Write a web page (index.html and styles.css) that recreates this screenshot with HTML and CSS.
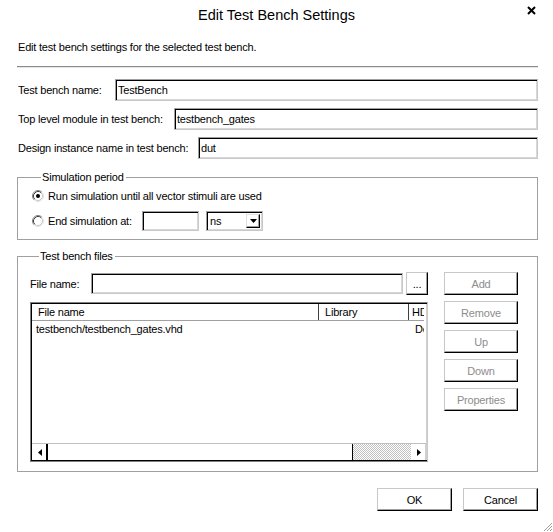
FILE: index.html
```html
<!DOCTYPE html>
<html>
<head>
<meta charset="utf-8">
<title>Edit Test Bench Settings</title>
<link rel="stylesheet" href="styles.css">
</head>
<body>
<div class="dialog">
  <div class="titlebar">
    <span class="title">Edit Test Bench Settings</span>
    <span class="close">
      <svg width="9" height="9" viewBox="0 0 9 9"><path d="M1 1L8 8M8 1L1 8" stroke="#000" stroke-width="2"/></svg>
    </span>
  </div>
  <div class="content">
    <p class="intro">Edit test bench settings for the selected test bench.</p>
    <div class="sep"></div>
    <div class="fields">
      <div class="row"><span class="lbl lbl-name">Test bench name:</span><div class="input">TestBench</div></div>
      <div class="row"><span class="lbl lbl-top">Top level module in test bench:</span><div class="input">testbench_gates</div></div>
      <div class="row"><span class="lbl lbl-inst">Design instance name in test bench:</span><div class="input">dut</div></div>
    </div>

    <fieldset class="group sim">
      <legend>Simulation period</legend>
      <div class="opt">
        <svg class="radio" width="12" height="12" viewBox="0 0 12 12">
          <circle cx="6" cy="6" r="5.5" fill="#fff"/>
          <path d="M2.11 9.89A5.5 5.5 0 0 1 9.89 2.11" stroke="#808080" fill="none"/>
          <path d="M9.89 2.11A5.5 5.5 0 0 1 2.11 9.89" stroke="#e3e3e3" fill="none"/>
          <path d="M2.82 9.18A4.5 4.5 0 0 1 9.18 2.82" stroke="#404040" fill="none"/>
          <path d="M9.18 2.82A4.5 4.5 0 0 1 2.82 9.18" stroke="#c8c8c8" fill="none"/>
          <circle cx="6" cy="6" r="2" fill="#000"/>
        </svg>
        <span>Run simulation until all vector stimuli are used</span>
      </div>
      <div class="opt opt2">
        <svg class="radio" width="12" height="12" viewBox="0 0 12 12">
          <circle cx="6" cy="6" r="5.5" fill="#fff"/>
          <path d="M2.11 9.89A5.5 5.5 0 0 1 9.89 2.11" stroke="#808080" fill="none"/>
          <path d="M9.89 2.11A5.5 5.5 0 0 1 2.11 9.89" stroke="#e3e3e3" fill="none"/>
          <path d="M2.82 9.18A4.5 4.5 0 0 1 9.18 2.82" stroke="#404040" fill="none"/>
          <path d="M9.18 2.82A4.5 4.5 0 0 1 2.82 9.18" stroke="#c8c8c8" fill="none"/>
        </svg>
        <span class="end-lbl">End simulation at:</span>
        <div class="input small"></div>
        <div class="select">
          <span class="val">ns</span>
          <span class="drop"><svg width="7" height="4" viewBox="0 0 7 4"><polygon points="0,0 7,0 3.5,4" fill="#000"/></svg></span>
        </div>
      </div>
    </fieldset>

    <fieldset class="group files">
      <legend>Test bench files</legend>
      <div class="files-body">
        <div class="files-left">
          <div class="fn-row">
            <span class="lbl lbl-fn">File name:</span>
            <div class="input"></div>
            <button class="btn browse">...</button>
          </div>
          <div class="listview">
            <div class="lv-view">
              <div class="lv-head">
                <div class="hc c1">File name</div>
                <div class="hc c2">Library</div>
                <div class="hc c3">HDL</div>
              </div>
              <div class="lv-row">
                <div class="ic c1">testbench/testbench_gates.vhd</div>
                <div class="ic c2"></div>
                <div class="ic c3">Default</div>
              </div>
            </div>
            <div class="sb">
              <div class="sb-btn sb-left"><svg width="4" height="7" viewBox="0 0 4 7"><polygon points="4,0 4,7 0,3.5" fill="#000"/></svg></div>
              <div class="sb-thumb"></div>
              <div class="sb-track"></div>
              <div class="sb-btn sb-right"><svg width="4" height="7" viewBox="0 0 4 7"><polygon points="0,0 0,7 4,3.5" fill="#000"/></svg></div>
            </div>
          </div>
        </div>
        <div class="side">
          <button class="btn dis">Add</button>
          <button class="btn dis">Remove</button>
          <button class="btn dis">Up</button>
          <button class="btn dis">Down</button>
          <button class="btn dis">Properties</button>
        </div>
      </div>
    </fieldset>

    <div class="footer">
      <button class="btn">OK</button>
      <button class="btn">Cancel</button>
    </div>
  </div>
  <svg class="grip" width="10" height="10" viewBox="0 0 10 10">
    <path d="M9 1L1 9M9 4L4 9M9 7L7 9" stroke="#a0a0a0" stroke-width="1"/>
  </svg>
</div>
</body>
</html>
```
FILE: styles.css
```css
* { box-sizing: border-box; }
html, body { margin: 0; padding: 0; background: #fff; }
body {
  font-family: "Liberation Sans", Arial, sans-serif;
  font-size: 11px;
  letter-spacing: -0.2px;
  color: #000;
}
.dialog { position: relative; width: 553px; height: 532px; overflow: hidden; background: #fff; }

.titlebar {
  display: grid;
  grid-template-columns: 1fr auto 1fr;
  height: 32px;
}
.title {
  grid-column: 2;
  align-self: start;
  margin-top: 7px;
  font-size: 14.5px;
  line-height: 17px;
  letter-spacing: 0;
}
.close {
  grid-column: 3;
  justify-self: end;
  align-self: start;
  margin-top: 6px;
  margin-right: 17px;
  display: flex;
}

.content { padding: 9px 15px 0 17px; display: flex; flex-direction: column; }
.intro { margin: 0; line-height: 13px; padding-left: 1px; }
.sep { height: 2px; border-top: 1px solid #8a8a8a; border-bottom: 1px solid #e6e6e6; margin-top: 12px; }

.fields { display: flex; flex-direction: column; gap: 7px; margin-top: 11px; }
.row { display: flex; align-items: center; height: 22px; }
.lbl { flex: none; padding-left: 1px; white-space: nowrap; }
.lbl-name { width: 98px; }
.lbl-top { width: 157px; }
.lbl-inst { width: 181px; }

.input {
  flex: 1;
  height: 22px;
  border: 1px solid;
  border-color: #a0a0a0 #c8c8c8 #c8c8c8 #a0a0a0;
  box-shadow: inset 1px 1px 0 #000, inset -1px -1px 0 #d8d8d8;
  background: #fff;
  padding: 0 3px 0 2px;
  line-height: 20px;
  white-space: nowrap;
  overflow: hidden;
}

.group { margin: 0; padding: 0; border: 1px solid #a0a0a0; min-width: 0; }
.group legend { margin-left: 9px; padding: 0 2px 0 1px; line-height: 13px; }

.sim { margin-top: 12px; padding: 5px 0 8px 14px; }
.opt { display: flex; align-items: center; height: 14px; }
.radio { flex: none; margin-right: 4px; }
.opt2 { height: 20px; margin-top: 8px; }
.end-lbl { width: 94px; flex: none; }
.input.small { flex: none; width: 57px; height: 20px; margin-right: 7px; }
.select {
  display: flex;
  align-items: center;
  width: 57px;
  height: 20px;
  border: 1px solid;
  border-color: #a0a0a0 #c8c8c8 #c8c8c8 #a0a0a0;
  box-shadow: inset 1px 1px 0 #000, inset -1px -1px 0 #d8d8d8;
  padding: 2px 2px 2px 2px;
}
.select .val { flex: 1; padding-left: 1px; line-height: 14px; }
.select .drop {
  width: 14px;
  height: 14px;
  display: flex;
  align-items: center;
  justify-content: center;
  border: 1px solid;
  border-color: #e0e0e0 #000 #000 #e0e0e0;
  box-shadow: inset -1px -1px 0 #a0a0a0;
  background: #fff;
}

.files { margin-top: 10px; padding: 9px 19px 9px 12px; }
.files-body { display: flex; gap: 16px; }
.files-left { flex: 1; display: flex; flex-direction: column; min-width: 0; }
.fn-row { display: flex; align-items: center; height: 21px; margin-top: 1px; }
.lbl-fn { width: 61px; padding-left: 0; }
.fn-row .input { height: 21px; line-height: 19px; }
.browse { width: 22px; height: 21px; margin-left: 3px; flex: none; line-height: 14px; }

.listview {
  margin-top: 8px;
  height: 160px;
  display: flex;
  flex-direction: column;
  border: 1px solid;
  border-color: #808080 #c8c8c8 #808080 #808080;
  box-shadow: inset 1px 1px 0 #000, inset 0 -1px 0 #000, inset -1px 0 0 #d0d0d0;
  padding: 1px;
  background: #fff;
}
.lv-view { flex: 1; overflow: hidden; margin-right: 2px; }
.lv-head { display: flex; height: 17px; border-bottom: 1px solid #a0a0a0; }
.hc { flex: none; line-height: 16px; padding-left: 6px; white-space: nowrap; overflow: hidden; }
.hc.c1, .hc.c2 { border-right: 1px solid #404040; }
.hc.c3 { padding-left: 3px; }
.c1 { width: 287px; }
.c2 { width: 90px; }
.c3 { width: 60px; }
.lv-row { display: flex; height: 15px; margin-top: 1px; }
.ic { flex: none; line-height: 14px; padding-left: 4px; white-space: nowrap; overflow: hidden; }
.ic.c3 { padding-left: 6px; }
.ic.c2 { padding-left: 5px; }

.sb { flex: none; display: flex; height: 17px; border-top: 1px solid #c0c0c0; }
.sb-btn { flex: none; display: flex; align-items: center; justify-content: center; background: #fff; }
.sb-left { width: 16px; border-right: 2px solid #000; padding-left: 1px; }
.sb-right { width: 15px; border-left: 1px solid #fff; border-right: 1px solid #d0d0d0; }
.sb-thumb { flex: 1; background: #fff; border-right: 1px solid #000; }
.sb-track {
  flex: none;
  width: 58px;
  background: repeating-conic-gradient(#c0c0c0 0 25%, #fff 0 50%) 0 0 / 2px 2px;
}

.side { flex: none; width: 74px; display: flex; flex-direction: column; gap: 6px; }
.btn {
  font: inherit;
  letter-spacing: inherit;
  background: #fff;
  border: 1px solid;
  border-color: #c8c8c8 #000 #000 #c8c8c8;
  box-shadow: inset -1px -1px 0 #a0a0a0, inset 1px 1px 0 #fff;
  padding: 0;
  color: #000;
  height: 23px;
}
.btn.dis { color: #8d8d8d; }

.footer { display: flex; justify-content: flex-end; gap: 11px; margin-top: 16px; }
.footer .btn { width: 75px; height: 23px; }

.grip { position: absolute; right: 0; bottom: 0; }
```
